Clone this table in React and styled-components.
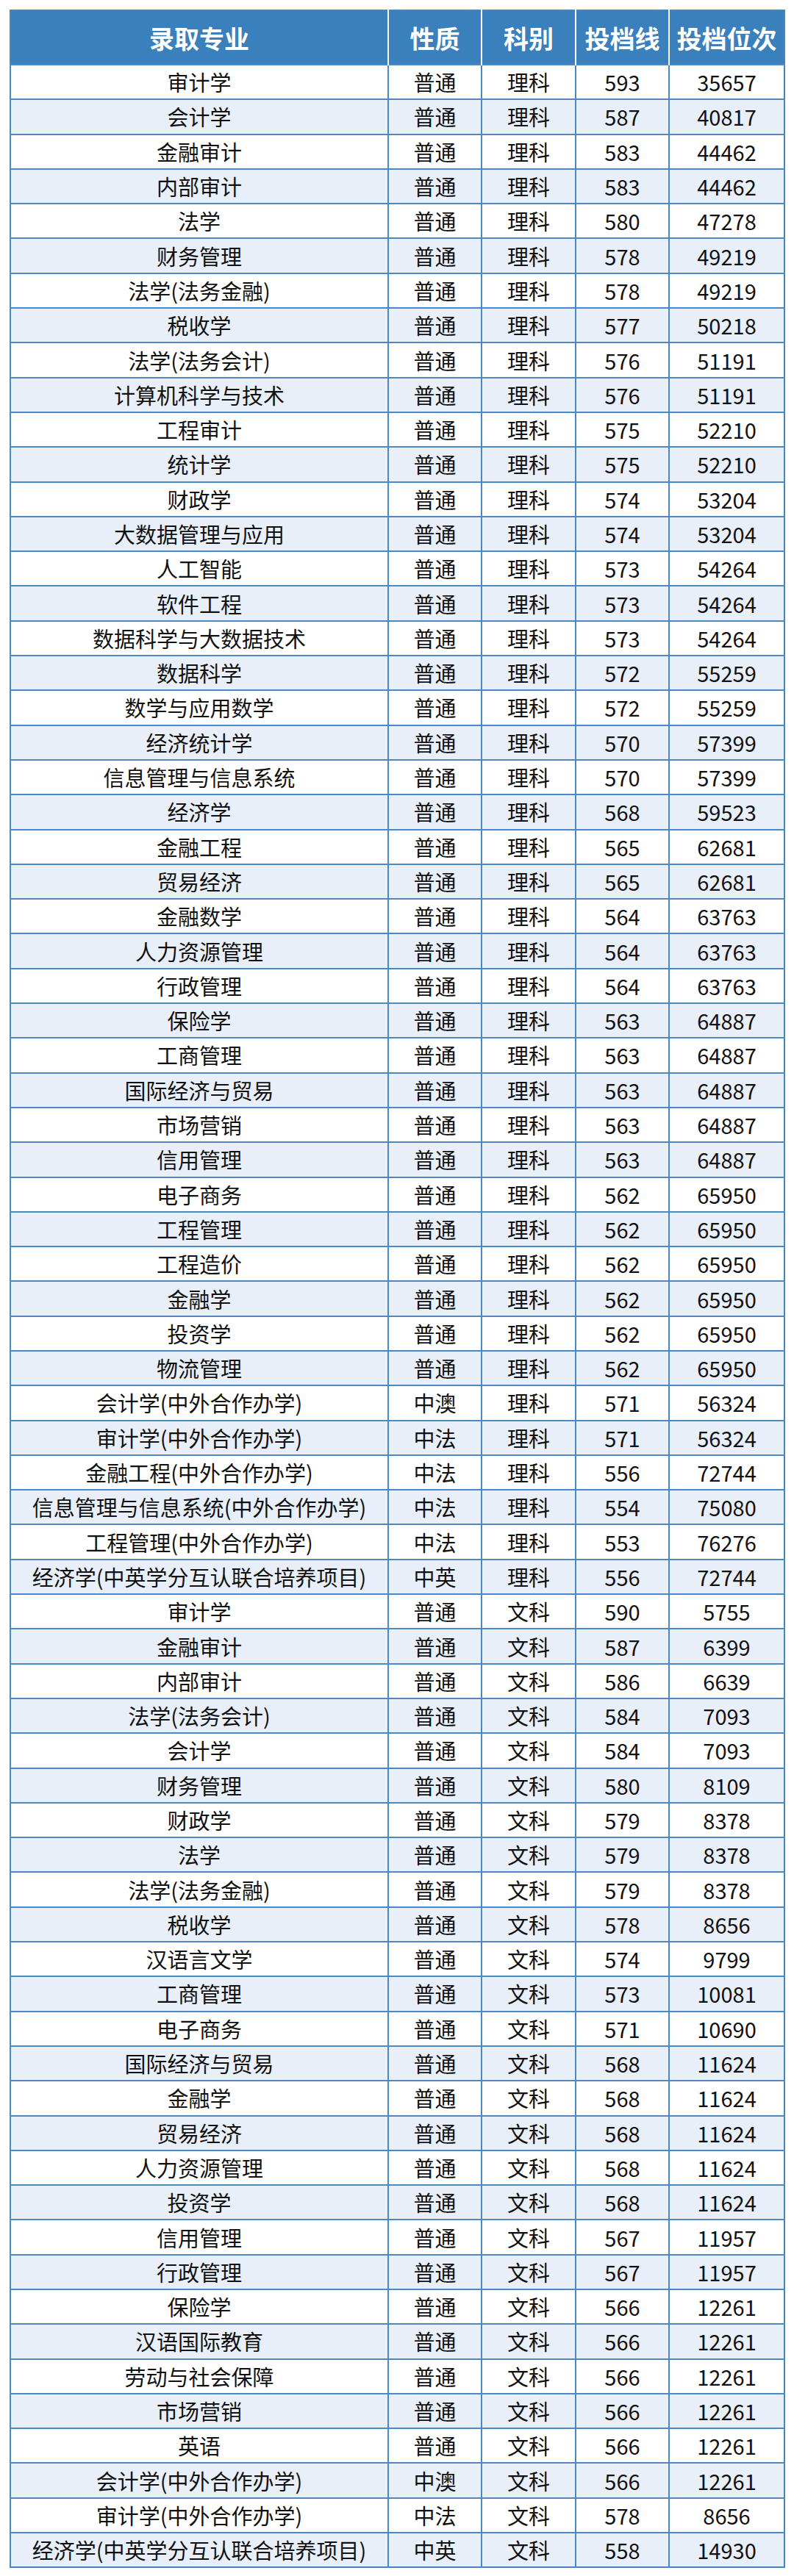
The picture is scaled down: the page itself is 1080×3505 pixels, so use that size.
import React from "react";
import styled, { createGlobalStyle } from "styled-components";

const GlobalStyle = createGlobalStyle`
  html, body {
    margin: 0;
    padding: 0;
    background: #ffffff;
  }
  body {
    font-family: "Noto Sans CJK SC", "Noto Sans", sans-serif;
  }
`;

const rows = [
  ["审计学", "普通", "理科", 593, 35657],
  ["会计学", "普通", "理科", 587, 40817],
  ["金融审计", "普通", "理科", 583, 44462],
  ["内部审计", "普通", "理科", 583, 44462],
  ["法学", "普通", "理科", 580, 47278],
  ["财务管理", "普通", "理科", 578, 49219],
  ["法学(法务金融)", "普通", "理科", 578, 49219],
  ["税收学", "普通", "理科", 577, 50218],
  ["法学(法务会计)", "普通", "理科", 576, 51191],
  ["计算机科学与技术", "普通", "理科", 576, 51191],
  ["工程审计", "普通", "理科", 575, 52210],
  ["统计学", "普通", "理科", 575, 52210],
  ["财政学", "普通", "理科", 574, 53204],
  ["大数据管理与应用", "普通", "理科", 574, 53204],
  ["人工智能", "普通", "理科", 573, 54264],
  ["软件工程", "普通", "理科", 573, 54264],
  ["数据科学与大数据技术", "普通", "理科", 573, 54264],
  ["数据科学", "普通", "理科", 572, 55259],
  ["数学与应用数学", "普通", "理科", 572, 55259],
  ["经济统计学", "普通", "理科", 570, 57399],
  ["信息管理与信息系统", "普通", "理科", 570, 57399],
  ["经济学", "普通", "理科", 568, 59523],
  ["金融工程", "普通", "理科", 565, 62681],
  ["贸易经济", "普通", "理科", 565, 62681],
  ["金融数学", "普通", "理科", 564, 63763],
  ["人力资源管理", "普通", "理科", 564, 63763],
  ["行政管理", "普通", "理科", 564, 63763],
  ["保险学", "普通", "理科", 563, 64887],
  ["工商管理", "普通", "理科", 563, 64887],
  ["国际经济与贸易", "普通", "理科", 563, 64887],
  ["市场营销", "普通", "理科", 563, 64887],
  ["信用管理", "普通", "理科", 563, 64887],
  ["电子商务", "普通", "理科", 562, 65950],
  ["工程管理", "普通", "理科", 562, 65950],
  ["工程造价", "普通", "理科", 562, 65950],
  ["金融学", "普通", "理科", 562, 65950],
  ["投资学", "普通", "理科", 562, 65950],
  ["物流管理", "普通", "理科", 562, 65950],
  ["会计学(中外合作办学)", "中澳", "理科", 571, 56324],
  ["审计学(中外合作办学)", "中法", "理科", 571, 56324],
  ["金融工程(中外合作办学)", "中法", "理科", 556, 72744],
  ["信息管理与信息系统(中外合作办学)", "中法", "理科", 554, 75080],
  ["工程管理(中外合作办学)", "中法", "理科", 553, 76276],
  ["经济学(中英学分互认联合培养项目)", "中英", "理科", 556, 72744],
  ["审计学", "普通", "文科", 590, 5755],
  ["金融审计", "普通", "文科", 587, 6399],
  ["内部审计", "普通", "文科", 586, 6639],
  ["法学(法务会计)", "普通", "文科", 584, 7093],
  ["会计学", "普通", "文科", 584, 7093],
  ["财务管理", "普通", "文科", 580, 8109],
  ["财政学", "普通", "文科", 579, 8378],
  ["法学", "普通", "文科", 579, 8378],
  ["法学(法务金融)", "普通", "文科", 579, 8378],
  ["税收学", "普通", "文科", 578, 8656],
  ["汉语言文学", "普通", "文科", 574, 9799],
  ["工商管理", "普通", "文科", 573, 10081],
  ["电子商务", "普通", "文科", 571, 10690],
  ["国际经济与贸易", "普通", "文科", 568, 11624],
  ["金融学", "普通", "文科", 568, 11624],
  ["贸易经济", "普通", "文科", 568, 11624],
  ["人力资源管理", "普通", "文科", 568, 11624],
  ["投资学", "普通", "文科", 568, 11624],
  ["信用管理", "普通", "文科", 567, 11957],
  ["行政管理", "普通", "文科", 567, 11957],
  ["保险学", "普通", "文科", 566, 12261],
  ["汉语国际教育", "普通", "文科", 566, 12261],
  ["劳动与社会保障", "普通", "文科", 566, 12261],
  ["市场营销", "普通", "文科", 566, 12261],
  ["英语", "普通", "文科", 566, 12261],
  ["会计学(中外合作办学)", "中澳", "文科", 566, 12261],
  ["审计学(中外合作办学)", "中法", "文科", 578, 8656],
  ["经济学(中英学分互认联合培养项目)", "中英", "文科", 558, 14930],
];

const headers = ["录取专业", "性质", "科别", "投档线", "投档位次"];
const widths = [514, 127, 128, 127, 157];

const Page = styled.div`
  padding: 13px 0 14px 13px;
`;

const Table = styled.table`
  border-collapse: collapse;
  table-layout: fixed;
  width: 1053px;
  border: 2px solid #4285c4;
`;

const HeadCell = styled.th`
  background: #3a80bc;
  color: #ffffff;
  font-size: 34px;
  font-weight: 700;
  height: 72px;
  padding: 0;
  text-align: center;
  border-left: 2px solid #ffffff;
  &:first-child {
    border-left: none;
  }
`;

const Row = styled.tr`
  background: ${(p) => (p.$striped ? "#e9eff9" : "#ffffff")};
`;

const Cell = styled.td`
  height: 47.3px;
  padding: 0;
  box-sizing: border-box;
  text-align: center;
  font-size: 29px;
  color: #111111;
  white-space: nowrap;
  border-top: 2px solid #4a88c6;
  border-left: 2px solid #4a88c6;
  line-height: 1;
`;

export default function App() {
  return (
    <>
      <GlobalStyle />
      <Page>
        <Table>
          <colgroup>
            {widths.map((w, i) => (
              <col key={i} style={{ width: w }} />
            ))}
          </colgroup>
          <thead>
            <tr>
              {headers.map((h) => (
                <HeadCell key={h}>{h}</HeadCell>
              ))}
            </tr>
          </thead>
          <tbody>
            {rows.map((r, i) => (
              <Row key={i} $striped={i % 2 === 1}>
                {r.map((c, j) => (
                  <Cell key={j}>{c}</Cell>
                ))}
              </Row>
            ))}
          </tbody>
        </Table>
      </Page>
    </>
  );
}
